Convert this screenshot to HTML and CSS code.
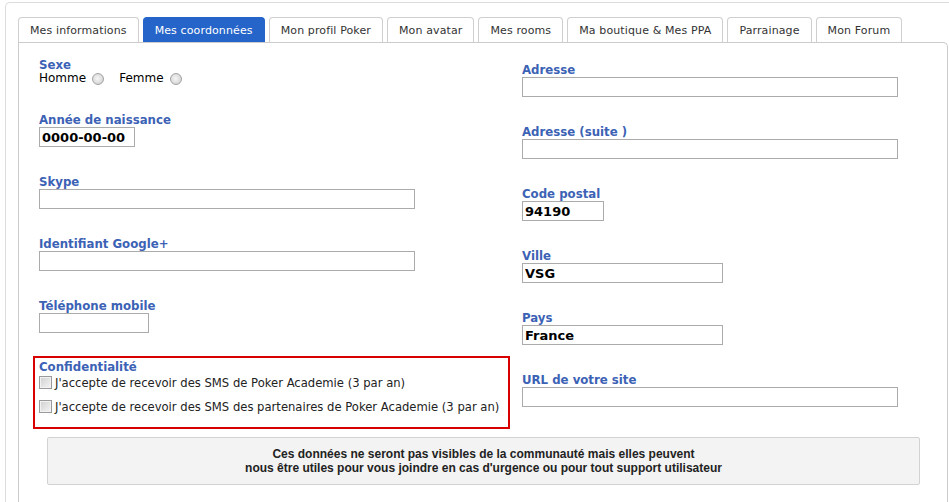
FILE: index.html
```html
<!DOCTYPE html>
<html lang="fr">
<head>
<meta charset="utf-8">
<title>Mes coordonnées</title>
<link rel="stylesheet" href="styles.css">
</head>
<body>
<div class="frame">
  <ul class="tabs">
    <li class="tab">Mes informations</li>
    <li class="tab active">Mes coordonnées</li>
    <li class="tab">Mon profil Poker</li>
    <li class="tab">Mon avatar</li>
    <li class="tab">Mes rooms</li>
    <li class="tab">Ma boutique &amp; Mes PPA</li>
    <li class="tab">Parrainage</li>
    <li class="tab">Mon Forum</li>
  </ul>
  <div class="panel">
    <div class="cols">
      <div class="col col-left">
        <div class="field field-sexe">
          <div class="label">Sexe</div>
          <div class="radios">
            <label class="radio-item">Homme <input type="radio" name="sexe" class="radio"></label>
            <label class="radio-item">Femme <input type="radio" name="sexe" class="radio"></label>
          </div>
        </div>
        <div class="field">
          <label class="label">Année de naissance</label>
          <input class="input w-date" type="text" value="0000-00-00">
        </div>
        <div class="field">
          <label class="label">Skype</label>
          <input class="input w-long" type="text" value="">
        </div>
        <div class="field">
          <label class="label">Identifiant Google+</label>
          <input class="input w-long" type="text" value="">
        </div>
        <div class="field field-last">
          <label class="label">Téléphone mobile</label>
          <input class="input w-tel" type="text" value="">
        </div>
        <div class="confid">
          <div class="label">Confidentialité</div>
          <label class="check"><input type="checkbox" class="checkbox"><span>J'accepte de recevoir des SMS de Poker Academie (3 par an)</span></label>
          <label class="check"><input type="checkbox" class="checkbox"><span>J'accepte de recevoir des SMS des partenaires de Poker Academie (3 par an)</span></label>
        </div>
      </div>
      <div class="col col-right">
        <div class="field">
          <label class="label">Adresse</label>
          <input class="input w-long" type="text" value="">
        </div>
        <div class="field">
          <label class="label">Adresse (suite )</label>
          <input class="input w-long" type="text" value="">
        </div>
        <div class="field">
          <label class="label">Code postal</label>
          <input class="input w-cp" type="text" value="94190">
        </div>
        <div class="field">
          <label class="label">Ville</label>
          <input class="input w-mid" type="text" value="VSG">
        </div>
        <div class="field">
          <label class="label">Pays</label>
          <input class="input w-mid" type="text" value="France">
        </div>
        <div class="field">
          <label class="label">URL de votre site</label>
          <input class="input w-long" type="text" value="">
        </div>
      </div>
    </div>
    <div class="notice">Ces données ne seront pas visibles de la communauté mais elles peuvent<br>nous être utiles pour vous joindre en cas d'urgence ou pour tout support utilisateur</div>
  </div>
</div>
</body>
</html>
```

FILE: styles.css
```css
html, body {
  margin: 0;
  padding: 0;
  background: #ffffff;
  overflow: hidden;
}

body {
  font-family: "DejaVu Sans", Verdana, sans-serif;
  color: #000;
}

.frame {
  margin: 2px 0 0 5px;
  border: 1px solid #dcdcdc;
  border-right: none;
  border-bottom: none;
  border-radius: 5px 0 0 0;
  padding: 14px 0 0 12px;
}

.tabs {
  list-style: none;
  margin: 0;
  padding: 0;
  display: flex;
  gap: 4px;
}

.tab {
  height: 25px;
  box-sizing: border-box;
  padding: 2px 11px 0;
  line-height: 22px;
  font-size: 11px;
  letter-spacing: 0.12px;
  color: #333;
  background: #fff;
  border: 1px solid #cfcfcf;
  border-bottom: none;
  border-radius: 4px 4px 0 0;
  white-space: nowrap;
}

.tab.active {
  background: #2565c9;
  border-color: #2565c9;
  color: #fff;
}

.panel {
  width: 930px;
  box-sizing: border-box;
  border: 1px solid #cccccc;
  border-bottom: none;
  border-radius: 0 5px 0 0;
  padding: 15px 0 30px 20px;
}

.cols {
  display: grid;
  grid-template-columns: 471px 1fr;
  column-gap: 12px;
}

.col-right {
  padding-top: 5px;
}

.field {
  margin-bottom: 28px;
}

.col-right .field:last-child {
  margin-bottom: 0;
}

.field-last {
  margin-bottom: 23px;
}

.label {
  display: block;
  font-size: 11.75px;
  font-weight: bold;
  line-height: 14px;
  height: 14px;
  color: #3b62b5;
}

.radios {
  display: flex;
  align-items: center;
  height: 13px;
  line-height: 17px;
  font-size: 12px;
}

.radio-item {
  display: flex;
  align-items: center;
  height: 17px;
  margin-right: 15px;
}

.radio {
  appearance: none;
  -webkit-appearance: none;
  width: 12px;
  height: 12px;
  margin: 0 0 0 6px;
  box-sizing: border-box;
  border: 1px solid #a4a4a4;
  border-radius: 50%;
  background: radial-gradient(circle at 45% 45%, #f6f6f6 0%, #dedede 55%, #c4c4c4 100%);
}

.input {
  display: block;
  box-sizing: border-box;
  height: 20px;
  margin: 0;
  padding: 0 2px;
  border: 1px solid #ababab;
  font-family: "DejaVu Sans", Verdana, sans-serif;
  font-size: 13px;
  font-weight: bold;
  color: #000;
  background: #fff;
  outline: none;
}

.w-long { width: 376px; }
.w-date { width: 96px; }
.w-tel { width: 110px; }
.w-cp { width: 82px; }
.w-mid { width: 201px; }

.confid {
  margin-left: -6px;
  border: 2px solid #d80000;
  padding: 2px 4px 5px;
}

.check {
  display: flex;
  align-items: flex-start;
  height: 24px;
  font-size: 11.6px;
  line-height: 19px;
  color: #222;
}

.checkbox {
  appearance: none;
  -webkit-appearance: none;
  flex: none;
  width: 13px;
  height: 13px;
  margin: 2px 3px 0 0;
  box-sizing: border-box;
  border: 1px solid #9a9a9a;
  background: linear-gradient(135deg, #cfcfcf 0%, #e6e6e6 60%, #f3f3f3 100%);
  box-shadow: inset 0 0 0 1px #f2f2f2;
}

.notice {
  margin: 8px 27px 0 8px;
  padding: 9px 0 9px;
  border: 1px solid #d2d2d2;
  border-radius: 2px;
  background: #f3f3f3;
  text-align: center;
  font-family: "Liberation Sans", Arial, sans-serif;
  font-size: 12px;
  font-weight: bold;
  line-height: 14px;
  color: #222;
}
```
